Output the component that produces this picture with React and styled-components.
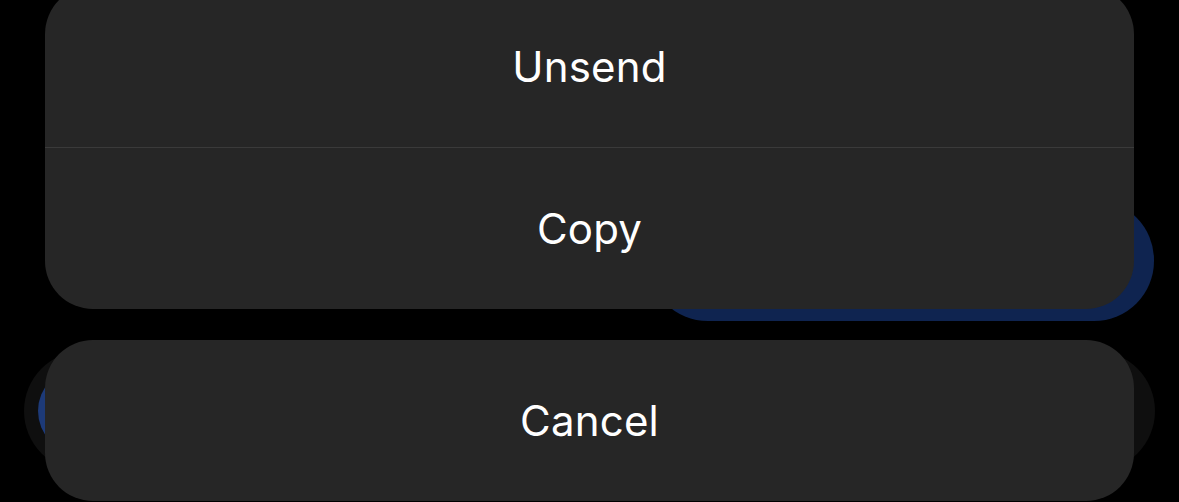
import React from "react";
import styled, { createGlobalStyle } from "styled-components";

const Global = createGlobalStyle`
  html, body { margin: 0; padding: 0; background: #000; }
  body { font-family: Inter, "Noto Sans", "Liberation Sans", sans-serif; -webkit-font-smoothing: antialiased; }
`;

const Screen = styled.div`
  position: relative;
  width: 1179px;
  height: 502px;
  overflow: hidden;
  background: #000;
`;

const Chat = styled.div`
  display: flex;
  flex-direction: column;
  height: 100%;
`;

const BubbleRow = styled.div`
  display: flex;
  justify-content: flex-end;
  padding: 200px 25px 0 0;
`;

const Bubble = styled.div`
  width: 506px;
  height: 121px;
  border-radius: 60px;
  background: #0f2450;
`;

const InputBar = styled.div`
  display: flex;
  align-items: center;
  margin: 30px 24px 0;
  height: 120px;
  border-radius: 60px;
  background: #0f0f0f;
  padding-left: 14px;
`;

const SendDot = styled.div`
  width: 86px;
  height: 86px;
  border-radius: 50%;
  background: #1d3a78;
`;

const Sheet = styled.div`
  position: absolute;
  top: -14px;
  left: 45px;
  right: 45px;
  display: flex;
  flex-direction: column;
  gap: 31px;
`;

const Group = styled.div`
  display: flex;
  flex-direction: column;
  background: #262626;
  border-radius: 48px;
  overflow: hidden;
`;

const Divider = styled.div`
  height: 1px;
  background: #3a3a3a;
`;

const Action = styled.button`
  all: unset;
  box-sizing: border-box;
  display: flex;
  align-items: center;
  justify-content: center;
  height: 161px;
  color: #fff;
  font-family: Inter, "Noto Sans", "Liberation Sans", sans-serif;
  font-size: 42px;
  font-weight: 400;
  letter-spacing: 0.2px;
  cursor: pointer;
`;

export default function App() {
  return (
    <>
      <Global />
      <Screen>
        <Chat>
          <BubbleRow>
            <Bubble />
          </BubbleRow>
          <InputBar>
            <SendDot />
          </InputBar>
        </Chat>
        <Sheet>
          <Group>
            <Action>Unsend</Action>
            <Divider />
            <Action>Copy</Action>
          </Group>
          <Group>
            <Action>Cancel</Action>
          </Group>
        </Sheet>
      </Screen>
    </>
  );
}
